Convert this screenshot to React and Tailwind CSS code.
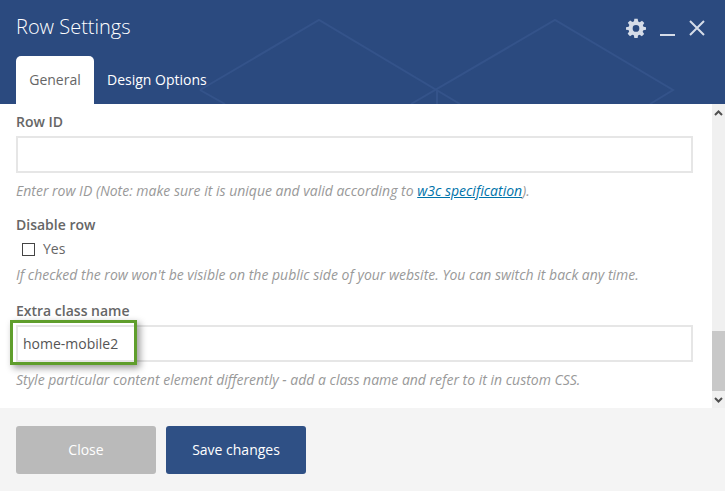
const font = { fontFamily: '"Open Sans", sans-serif' };

const HeaderPattern = () => (
    <svg className="absolute inset-0 pointer-events-none" width="725" height="104" fill="none" stroke="#34538a" strokeWidth="2">
        <path d="M200 90 L319 20 L460 104" />
        <path d="M200 90 L225 104" />
        <path d="M411 104 L555 20 L673 90 L650 104" />
        <path d="M437 90 V104" />
    </svg>
);

const Field = ({ value }) => (
    <div className="h-[37px] border-2 border-[#e6e6e6] bg-white pl-[5px] flex items-center text-sm text-[#555]">
        {value}
    </div>
);

const Label = ({ children }) => (
    <div className="text-sm leading-5 font-semibold text-[#666]">{children}</div>
);

const Help = ({ children }) => (
    <p className="text-sm leading-5 italic text-[#999]">{children}</p>
);

export default function App() {
    return (
        <div className="w-[725px] h-[491px] flex flex-col overflow-hidden bg-white" style={font}>
            <header className="relative h-[104px] bg-[#2b4a7f] px-4 shrink-0">
                <HeaderPattern />
                <div className="relative flex items-start justify-between">
                    <h1 className="pt-[13px] text-xl leading-7 font-light text-white">Row Settings</h1>
                    <div className="flex items-start gap-[14px] pt-[18px] pr-[4px] text-[#d5dce8]">
                        <svg width="20" height="20" viewBox="0 0 24 24" fill="currentColor">
                            <path fillRule="evenodd" d="M10 1h4l.6 3.2 1.9.8 2.7-1.8 2.8 2.8-1.8 2.7.8 1.9L24 11v3l-3.2.6-.8 1.9 1.8 2.7-2.8 2.8-2.7-1.8-1.9.8L14 24h-4l-.6-3.2-1.9-.8-2.7 1.8L2 19l1.8-2.7-.8-1.9L0 14v-3l3.2-.6.8-1.9L2.2 5.8 5 3l2.7 1.8 1.9-.8L10 1zm2 7.5a4 4 0 1 0 0 8 4 4 0 0 0 0-8z" />
                        </svg>
                        <div className="w-[15px] h-[2px] bg-current mt-[16px]"></div>
                        <svg width="16" height="16" viewBox="0 0 16 16" stroke="currentColor" strokeWidth="2" fill="none" className="mt-[2px]">
                            <path d="M1 1 L15 15 M15 1 L1 15" />
                        </svg>
                    </div>
                </div>
                <nav className="relative flex mt-[15px] text-sm">
                    <div className="w-[78px] h-[48px] bg-white rounded-t-[5px] flex items-center justify-center text-[#666]">General</div>
                    <div className="h-[48px] pl-[13px] flex items-center text-white">Design Options</div>
                </nav>
            </header>

            <div className="flex h-[304px] shrink-0">
                <main className="relative flex-1 pl-4 pr-[19px] pt-2">
                    <Label>Row ID</Label>
                    <div className="mt-1">
                        <Field />
                    </div>
                    <div className="mt-2">
                        <Help>
                            Enter row ID (Note: make sure it is unique and valid according to{" "}
                            <a className="underline text-[#0073aa]">w3c specification</a>).
                        </Help>
                    </div>
                    <div className="mt-[14px]">
                        <Label>Disable row</Label>
                    </div>
                    <div className="flex items-center h-5 mt-[4px] pl-[6px] text-sm text-[#666]">
                        <span className="w-[13px] h-[13px] border border-[#444] bg-white"></span>
                        <span className="ml-2">Yes</span>
                    </div>
                    <div className="mt-[6px]">
                        <Help>If checked the row won't be visible on the public side of your website. You can switch it back any time.</Help>
                    </div>
                    <div className="mt-[16px]">
                        <Label>Extra class name</Label>
                    </div>
                    <div className="mt-1">
                        <Field value="home-mobile2" />
                    </div>
                    <div className="mt-2">
                        <Help>Style particular content element differently - add a class name and refer to it in custom CSS.</Help>
                    </div>
                    <div className="absolute left-[10px] top-[216px] w-[127px] h-[45px] border-[3px] border-[#5f9e2c] shadow-[3px_3px_7px_rgba(0,0,0,0.4)]"></div>
                </main>
                <div className="w-[13px] bg-[#f0f0f0] flex flex-col">
                    <div className="h-[17px] flex items-center justify-center">
                        <svg width="9" height="6" viewBox="0 0 9 6" fill="none" stroke="#505050" strokeWidth="2"><path d="M1 5 L4.5 1.5 L8 5" /></svg>
                    </div>
                    <div className="flex-1"></div>
                    <div className="h-[60px] bg-[#c8c8c8]"></div>
                    <div className="h-[17px] flex items-center justify-center">
                        <svg width="9" height="6" viewBox="0 0 9 6" fill="none" stroke="#505050" strokeWidth="2"><path d="M1 1 L4.5 4.5 L8 1" /></svg>
                    </div>
                </div>
            </div>

            <footer className="flex-1 bg-[#f4f4f4] pt-[18px] pl-4 flex gap-[10px] text-sm text-white">
                <button className="w-[140px] h-[48px] rounded-[3px] bg-[#bababa]">Close</button>
                <button className="w-[140px] h-[48px] rounded-[3px] bg-[#2f5085]">Save changes</button>
            </footer>
        </div>
    );
}
